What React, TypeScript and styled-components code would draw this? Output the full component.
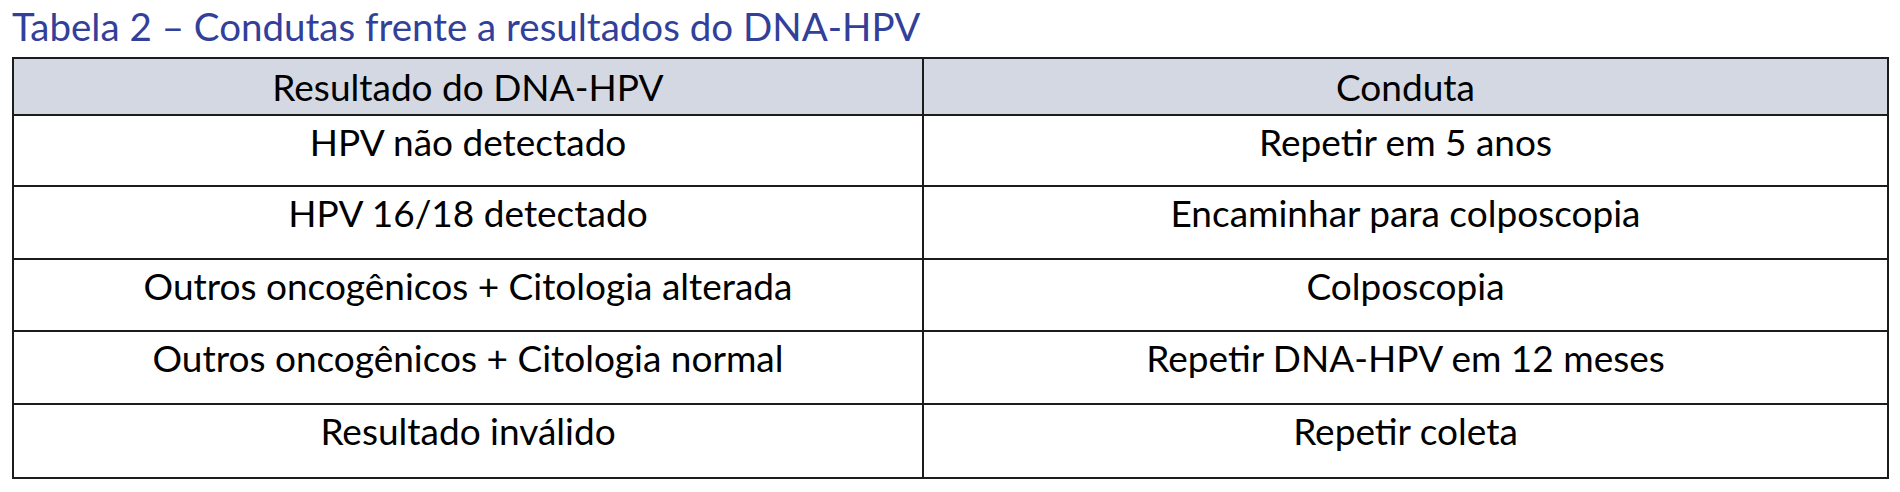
import React from "react";
import styled, { createGlobalStyle } from "styled-components";

const GlobalStyle = createGlobalStyle`
  html, body {
    margin: 0;
    padding: 0;
    background: #ffffff;
  }
  body {
    font-family: "Lato", "Liberation Sans", sans-serif;
    color: #000000;
  }
`;

const Page = styled.div`
  width: 1900px;
  height: 492px;
  padding: 3px 11px 0 12px;
  box-sizing: border-box;
`;

const Caption = styled.div`
  font-size: 38.5px;
  line-height: 47px;
  color: #32409a;
  margin-bottom: 7px;
  white-space: nowrap;
`;

const Table = styled.table`
  width: 100%;
  border-collapse: collapse;
  table-layout: fixed;
  border: 2px solid #1c1c1c;
`;

const HeadRow = styled.tr`
  height: 57px;
  background: #d4d8e2;
`;

const Row = styled.tr<{ $h: number }>`
  height: ${(p) => p.$h}px;
`;

const Cell = styled.td<{ $head?: boolean }>`
  border: 2px solid #1c1c1c;
  text-align: center;
  vertical-align: top;
  padding: ${(p) => (p.$head ? "6px" : "4px")} 0 0 0;
  font-size: 37px;
  font-weight: 400;
  line-height: 44px;
  white-space: nowrap;
`;

const rows: [string, string, number][] = [
  ["HPV não detectado", "Repetir em 5 anos", 71],
  ["HPV 16/18 detectado", "Encaminhar para colposcopia", 73],
  ["Outros oncogênicos + Citologia alterada", "Colposcopia", 72],
  ["Outros oncogênicos + Citologia normal", "Repetir DNA-HPV em 12 meses", 73],
  ["Resultado inválido", "Repetir coleta", 74],
];

export default function App() {
  return (
    <Page>
      <GlobalStyle />
      <Caption>Tabela 2 – Condutas frente a resultados do DNA-HPV</Caption>
      <Table>
        <colgroup>
          <col style={{ width: 910 }} />
          <col />
        </colgroup>
        <thead>
          <HeadRow>
            <Cell as="th" $head>
              Resultado do DNA-HPV
            </Cell>
            <Cell as="th" $head>
              Conduta
            </Cell>
          </HeadRow>
        </thead>
        <tbody>
          {rows.map(([a, b, h]) => (
            <Row key={a} $h={h}>
              <Cell>{a}</Cell>
              <Cell>{b}</Cell>
            </Row>
          ))}
        </tbody>
      </Table>
    </Page>
  );
}
